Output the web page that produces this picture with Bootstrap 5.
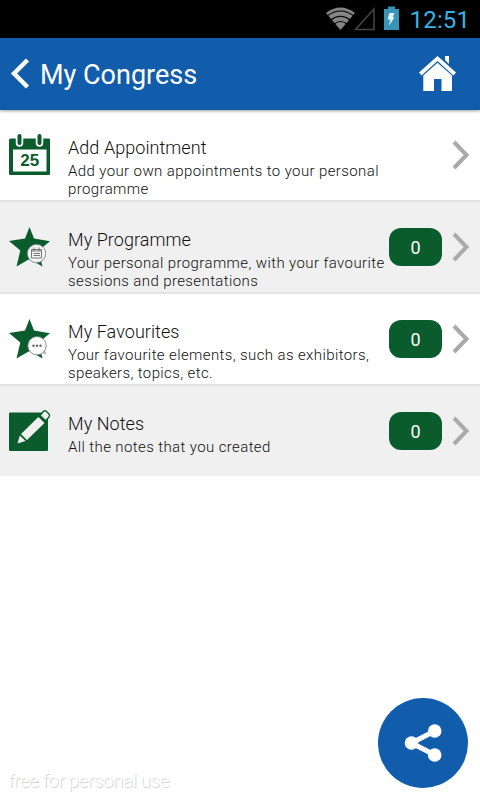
<!DOCTYPE html>
<html lang="en">
<head>
<meta charset="utf-8">
<meta name="viewport" content="width=device-width, initial-scale=1">
<title>My Congress</title>
<link href="https://cdn.jsdelivr.net/npm/bootstrap@5.3.0/dist/css/bootstrap.min.css" rel="stylesheet">
<style>
body{font-family:Roboto,"Noto Sans",sans-serif;width:480px;height:800px;overflow:hidden;background:#fff;color:#333}
svg{display:block;flex:none}
.statusbar{height:38px;background:#000;padding-right:10px}
.clock{font-size:24px;line-height:38px;color:#33b5e5;letter-spacing:.1px;margin-left:9px;padding-top:2px}
.appbar{height:72px;background:#125dab;padding:0 23px 0 10px;box-shadow:0 1px 3px rgba(0,0,0,.4);z-index:1}
.appbar h1{font-size:27px;line-height:72px;color:#fff;font-weight:400;letter-spacing:0;margin-left:10px;padding-top:1px}
.entry{height:92px;padding:0 9px 0 8px;border-bottom:2px solid #e2e2e2;color:#111}
.entry:nth-child(even){background:#f0f0f0}
.entry:last-child{height:90px;border-bottom:0}
.entry-icon{margin-top:22px}
.entry-text{margin:26px 0 0 16px;height:61px;overflow:hidden;white-space:nowrap}
.entry-text h2{font-size:18px;line-height:24px;font-weight:300;letter-spacing:.06px;margin:0;color:#111}
.entry-text p{font-size:15px;line-height:18px;font-weight:300;letter-spacing:.39px;margin:2px 0 0}
.count{width:53px;height:38px;border-radius:12px;background:#0b5c2d;color:#fff;font-size:18px;line-height:40px;margin:26px 9px 0 0}
.chev{margin-top:30px}
.share{right:12px;bottom:12px;width:90px;height:90px;background:#125dab}
.watermark{left:8px;bottom:7px;font-size:19px;line-height:24px;font-weight:300;letter-spacing:-.5px;color:#fff;text-shadow:1px 1px 0 #d4d4d4}
</style>
<script src="https://cdn.jsdelivr.net/npm/bootstrap@5.3.0/dist/js/bootstrap.bundle.min.js"></script>
</head>
<body class="d-flex flex-column position-relative">
<div class="statusbar d-flex align-items-center justify-content-end">
  <svg width="76" height="38" viewBox="325 0 76 38">
    <path d="M326 13Q340.500 2 355 13L340.500 30Z" fill="#858585"/>
    <path d="M327 16Q340.500 6 354 16M330.500 20Q340.500 12.500 350.500 20M334 24Q340.500 19 347 24" fill="none" stroke="#000" stroke-width="1.200"/>
    <path d="M355.500 29.500L374 9V29.500Z" fill="none" stroke="#444" stroke-width="1.500"/>
    <path d="M384 9H388V6.500H395V9H399V30H384Z" fill="#3995b8"/>
    <path d="M389.500 13H394.500L392.800 17.500H394.500L389 25.500L390.300 19.500H387.500Z" fill="#e4f3f8"/>
  </svg>
  <span class="clock">12:51</span>
</div>
<header class="appbar d-flex align-items-center position-relative">
  <svg width="20" height="32" viewBox="0 0 20 32"><path d="M17.500 2L4 15.500L17.500 29" fill="none" stroke="#fff" stroke-width="4.500"/></svg>
  <h1 class="mb-0">My Congress</h1>
  <svg class="ms-auto" width="38" height="38" viewBox="419 55 38 38" fill="#fff">
    <path d="M445 56H449V64L445 60Z"/><path d="M419 72.500L437.500 56L456 72.500L453.500 75.500L437.500 61L421.500 75.500Z"/>
    <path d="M423.300 75.500L437.500 62.800L452 75.500V91H441.500V79H434V91H423.300Z"/>
  </svg>
</header>
<main>
  <div class="entry d-flex align-items-start">
    <svg class="entry-icon" width="44" height="44" viewBox="0 0 44 44">
      <path d="M2.500 6.500H41Q42 6.500 42 7.500V41.500Q42 43 40.500 43H2.500Q1 43 1 41.500V8Q1 6.500 2.500 6.500Z" fill="#0b5c2d"/>
      <path d="M5 17.500H38.500V39.500H5Z" fill="#fff"/>
      <path d="M11.500 4V11M31.500 4V11" stroke="#fff" stroke-width="7.500" stroke-linecap="round"/>
      <path d="M11.500 4V11M31.500 4V11" stroke="#0b5c2d" stroke-width="4" stroke-linecap="round"/>
      <text x="21.700" y="34" text-anchor="middle" font-family="Liberation Sans,sans-serif" font-size="17" font-weight="700" fill="#0b5c2d">25</text>
    </svg>
    <div class="entry-text"><h2>Add Appointment</h2><p>Add your own appointments to your personal<br>programme</p></div>
    <svg class="chev ms-auto" width="20" height="30" viewBox="0 0 20 30"><path d="M3 2L15.500 15L3 28" fill="none" stroke="#aaa" stroke-width="4"/></svg>
  </div>
  <div class="entry d-flex align-items-start">
    <svg class="entry-icon" width="44" height="44" viewBox="0 0 44 44">
      <path d="M21.500 3L26 14.500L42 17.200L30.500 26.500L34.500 42.500L21.500 35L8.500 42.500L12.300 26.500L1 17L17 14.500Z" fill="#0b5c2d"/>
      <circle cx="28.500" cy="29.500" r="9.200" fill="#f5f5f5" stroke="#777" stroke-width=".8"/>
      <path d="M23.500 25.500H33.500V34H23.500Z" fill="none" stroke="#777"/><path d="M23.500 27H33.500M26 23.500V26.500M31 23.500V26.500M25.500 29.500H32M25.500 31.500H32" stroke="#777" stroke-width="1.100"/>
    </svg>
    <div class="entry-text"><h2>My Programme</h2><p>Your personal programme, with your favourite<br>sessions and presentations</p></div>
    <div class="count ms-auto text-center flex-shrink-0">0</div>
    <svg class="chev" width="20" height="30" viewBox="0 0 20 30"><path d="M3 2L15.500 15L3 28" fill="none" stroke="#aaa" stroke-width="4"/></svg>
  </div>
  <div class="entry d-flex align-items-start">
    <svg class="entry-icon" width="44" height="44" viewBox="0 0 44 44">
      <path d="M21.500 3L26 14.500L42 17.200L30.500 26.500L34.500 42.500L21.500 35L8.500 42.500L12.300 26.500L1 17L17 14.500Z" fill="#0b5c2d"/>
      <path d="M34 36L37.500 37.500L36 34" fill="#fff" stroke="#777" stroke-width=".8"/>
      <circle cx="29" cy="29.700" r="9.200" fill="#fbfbfb" stroke="#777" stroke-width=".8"/>
      <g fill="#666"><circle cx="25.500" cy="29.700" r="1.200"/><circle cx="29" cy="29.700" r="1.200"/><circle cx="32.500" cy="29.700" r="1.200"/></g>
    </svg>
    <div class="entry-text"><h2>My Favourites</h2><p>Your favourite elements, such as exhibitors,<br>speakers, topics, etc.</p></div>
    <div class="count ms-auto text-center flex-shrink-0">0</div>
    <svg class="chev" width="20" height="30" viewBox="0 0 20 30"><path d="M3 2L15.500 15L3 28" fill="none" stroke="#aaa" stroke-width="4"/></svg>
  </div>
  <div class="entry d-flex align-items-start">
    <svg class="entry-icon" width="44" height="44" viewBox="0 0 44 44">
      <rect x="1" y="4.500" width="39" height="38.500" rx="1.200" fill="#0b5c2d"/>
      <path d="M30.300 9L36.500 15L19 32L13 26ZM11.800 27.500L17.500 33L9.500 35.500Z" fill="#f0f0f0"/>
      <path d="M32 7.500L35.500 3.300Q37 2.200 38.500 3.500L41 6Q42.200 7.500 41 9L37.800 12.800Z" fill="#f0f0f0" stroke="#0b5c2d" stroke-width="1.400" stroke-linejoin="round"/>
    </svg>
    <div class="entry-text"><h2>My Notes</h2><p>All the notes that you created</p></div>
    <div class="count ms-auto text-center flex-shrink-0">0</div>
    <svg class="chev" width="20" height="30" viewBox="0 0 20 30"><path d="M3 2L15.500 15L3 28" fill="none" stroke="#aaa" stroke-width="4"/></svg>
  </div>
</main>
<div class="watermark position-absolute">free for personal use</div>
<div class="share position-absolute rounded-circle">
  <svg width="90" height="90" viewBox="378 698 90 90"><path d="M434.700 731L411.500 743L434.700 755" fill="none" stroke="#fff" stroke-width="5"/><g fill="#fff"><circle cx="434.700" cy="731" r="6.800"/><circle cx="411.500" cy="743" r="6.800"/><circle cx="434.700" cy="755" r="6.800"/></g></svg>
</div>
</body>
</html>
